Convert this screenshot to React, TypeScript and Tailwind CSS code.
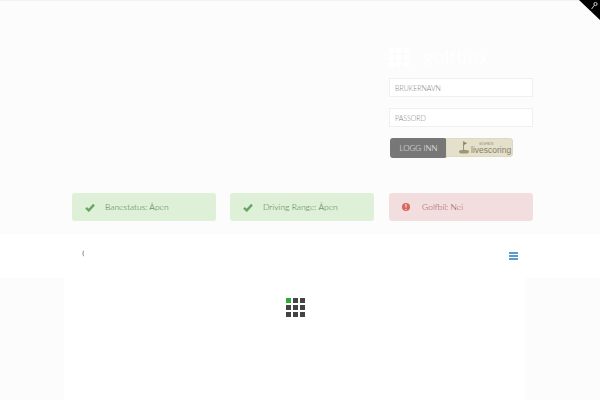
import React from 'react'

const Check = () => (
  <svg width="10" height="9" viewBox="0 0 10 9" className="shrink-0">
    <path d="M1 4.8 L3.8 7.4 L9 1.6" fill="none" stroke="#6aa567" strokeWidth="2.4" />
  </svg>
)

const Alert = ({ ok, label, className }: { ok: boolean; label: string; className: string }) => (
  <div
    className={`h-7 flex items-center rounded-[3px] pl-[13px] ${ok ? 'bg-[#dff0d8] text-[#3f7a40] gap-[10px]' : 'bg-[#f2dede] text-[#a04a4c] gap-[12px]'} ${className}`}
  >
    {ok ? (
      <Check />
    ) : (
      <span className="w-2 h-2 rounded-full bg-[#d9665f] text-white text-[7px] leading-[8px] text-center font-bold shrink-0">!</span>
    )}
    <span>{label}</span>
  </div>
)

export default function App() {
  return (
    <div className="relative w-[600px] h-[400px] overflow-hidden bg-white font-['Lato',sans-serif]">
      <div className="h-[234px] bg-[#fcfcfc] border-t border-[#f2f2f2] pt-[44px] flex flex-col">
        <div className="ml-[389px] w-[144px] h-[148px] flex flex-col shrink-0">
          <div className="flex items-center gap-[14px] h-6 text-white text-[19px] tracking-wide">
            <div className="grid grid-cols-3 gap-[2px] w-[20px]">
              {Array.from({ length: 9 }).map((_, i) => (
                <span key={i} className="w-[5px] h-[5px] bg-white" />
              ))}
            </div>
            <span>golfbox</span>
          </div>
          <input
            placeholder="BRUKERNAVN"
            className="mt-[9px] h-[19px] w-[144px] bg-white border border-[#f0f0f0] px-[5px] text-[7px] font-light placeholder:text-[#808080] outline-none"
          />
          <input
            placeholder="PASSORD"
            className="mt-[11px] h-[19px] w-[144px] bg-white border border-[#f0f0f0] px-[5px] text-[7px] font-light placeholder:text-[#808080] outline-none"
          />
          <div className="mt-[11px] ml-px flex h-[20px]">
            <button className="w-[57px] h-[20px] rounded-[3px] bg-[#777777] text-[#f4f4f4] text-[8px] font-light">
              LOGG INN
            </button>
            <div className="w-[67px] h-[19px] -ml-px rounded-r-[3px] rounded-l-[1px] bg-[#e4e0cc] border border-[#ded9c3] flex items-center pl-[11px] gap-[1px] overflow-hidden">
              <svg width="12" height="15" viewBox="0 0 13 15" className="shrink-0">
                <path d="M6 1 V11" stroke="#8f8a68" strokeWidth="1" />
                <path d="M6 1 L10 3 L6 5 Z" fill="#8f8a68" />
                <ellipse cx="6.5" cy="12" rx="5.5" ry="2" fill="#9c9775" />
              </svg>
              <div className="flex flex-col leading-none text-[#85815f] font-['Liberation_Sans',sans-serif]">
                <span className="text-[3px] ml-[8px] leading-[4px]">GOLFBOX</span>
                <span className="text-[8.5px] leading-[8px]">livescoring</span>
              </div>
            </div>
          </div>
        </div>
        <div className="flex text-[8.5px] font-light">
          <Alert ok label="Banestatus: Åpen" className="ml-[72px] w-[144px]" />
          <Alert ok label="Driving Range: Åpen" className="ml-[14px] w-[144px]" />
          <Alert ok={false} label="Golfbil: Nei" className="ml-[15px] w-[144px]" />
        </div>
      </div>

      <div className="h-[44px] bg-white flex items-center justify-between pl-[82px] pr-[82px]">
        <span className="w-[2px] overflow-hidden text-[9px] text-[#8a8a8a] -mt-[4px]">G</span>
        <div className="flex flex-col gap-px w-[9px] -mt-[1px]">
          <span className="h-[2px] bg-[#5b9bd0]" />
          <span className="h-[2px] bg-[#5b9bd0]" />
          <span className="h-[2px] bg-[#5b9bd0]" />
        </div>
      </div>

      <div className="h-[122px] bg-[#fcfcfc] flex justify-center">
        <div className="w-[462px] h-full bg-white pt-[20px] flex justify-center mr-[10px]">
          <div className="grid grid-cols-3 gap-[2px] w-[19px] h-[19px]">
            {Array.from({ length: 9 }).map((_, i) => (
              <span key={i} className={`w-[5px] h-[5px] ${i === 0 ? 'bg-[#2eaa36]' : 'bg-[#444444]'}`} />
            ))}
          </div>
        </div>
      </div>

      <div className="absolute top-0 right-0 w-[21px] h-[20px]">
        <svg width="21" height="20" viewBox="0 0 21 20">
          <path d="M0 0 H21 V20 Z" fill="#000000" />
          <circle cx="16.5" cy="4" r="1.6" fill="none" stroke="#cccccc" strokeWidth="1" />
          <path d="M15.4 5.2 L12.6 9" stroke="#cccccc" strokeWidth="1" />
        </svg>
      </div>
    </div>
  )
}
